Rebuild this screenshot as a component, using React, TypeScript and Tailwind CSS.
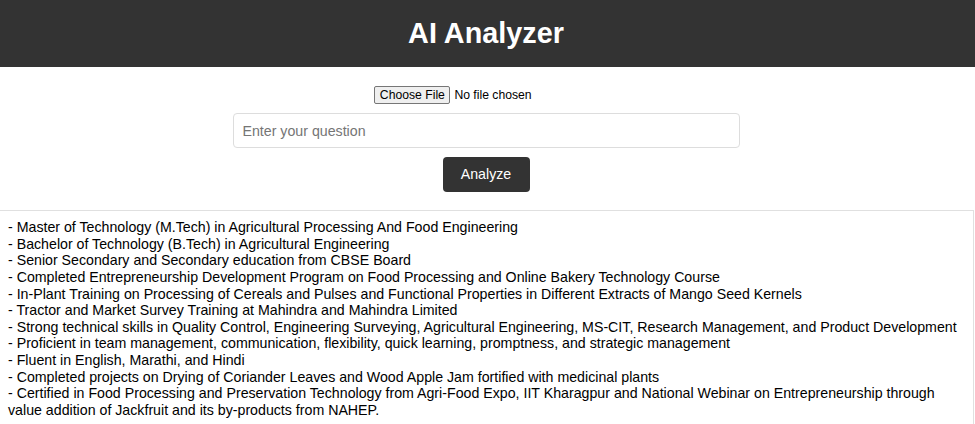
import React from "react";

const lines = [
  "- Master of Technology (M.Tech) in Agricultural Processing And Food Engineering",
  "- Bachelor of Technology (B.Tech) in Agricultural Engineering",
  "- Senior Secondary and Secondary education from CBSE Board",
  "- Completed Entrepreneurship Development Program on Food Processing and Online Bakery Technology Course",
  "- In-Plant Training on Processing of Cereals and Pulses and Functional Properties in Different Extracts of Mango Seed Kernels",
  "- Tractor and Market Survey Training at Mahindra and Mahindra Limited",
  "- Strong technical skills in Quality Control, Engineering Surveying, Agricultural Engineering, MS-CIT, Research Management, and Product Development",
  "- Proficient in team management, communication, flexibility, quick learning, promptness, and strategic management",
  "- Fluent in English, Marathi, and Hindi",
  "- Completed projects on Drying of Coriander Leaves and Wood Apple Jam fortified with medicinal plants",
  "- Certified in Food Processing and Preservation Technology from Agri-Food Expo, IIT Kharagpur and National Webinar on Entrepreneurship through value addition of Jackfruit and its by-products from NAHEP.",
];

export default function App() {
  return (
    <div className="min-h-screen bg-white text-black font-['Liberation_Sans',Arial,sans-serif] overflow-hidden">
      {/* header */}
      <header className="h-[67px] bg-[#333333] flex items-center justify-center pr-[3px]">
        <h1 className="text-white font-bold text-[28.8px] leading-none">AI Analyzer</h1>
      </header>

      {/* form */}
      <div className="flex flex-col items-center pt-[19px] pr-[3px]">
        <label className="mr-[66px] flex items-center gap-[4px] text-[12.2px] cursor-default">
          <span className="h-[18px] w-[76px] flex items-center justify-center border border-[#767676] bg-[#efefef] rounded-[2px]">
            Choose File
          </span>
          <span>No file chosen</span>
          <input type="file" className="hidden" />
        </label>
        <input
          type="text"
          placeholder="Enter your question"
          className="mt-[9px] w-[507px] h-[35px] border border-[#dddddd] rounded-[4px] px-[9px] text-[14.2px] placeholder:text-[#757575] outline-none"
        />
        <button className="mt-[9px] w-[87px] h-[35px] bg-[#333333] text-white rounded-[4px] text-[14.2px]">
          Analyze
        </button>
      </div>

      {/* result */}
      <div className="mt-[18px] ml-[-1px] mr-[1px] border border-[#e0e0e0] pt-[8px] pl-[8px] pr-[7px] pb-4 text-[14.2px] leading-[16.6px] whitespace-pre-wrap">
        {lines.join("\n")}
      </div>
    </div>
  );
}
